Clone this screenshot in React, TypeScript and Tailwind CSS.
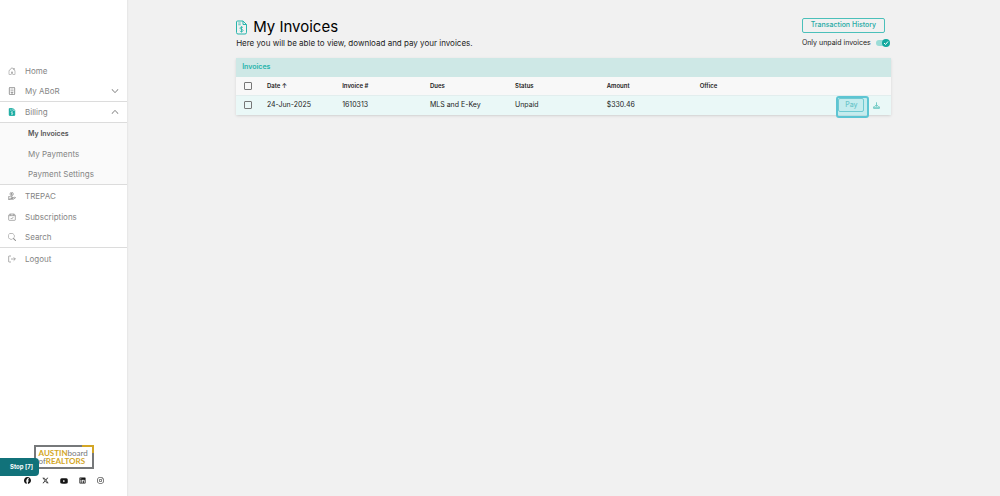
import React from "react";
import { FaFacebook, FaXTwitter, FaYoutube, FaLinkedin, FaInstagram } from "react-icons/fa6";
import { BsHouseDoor, BsSearch, BsChevronDown, BsChevronUp } from "react-icons/bs";

const InvoiceIcon = ({ className, solid = false }: { className: string; solid?: boolean }) => (
  <svg viewBox="0 0 22 28" className={className} fill="none" stroke="currentColor" strokeWidth="2" aria-hidden="true">
    <path d="M3 1h11l7 7v16a3 3 0 0 1-3 3H4a3 3 0 0 1-3-3V3a2 2 0 0 1 2-2Z" fill={solid ? "currentColor" : "none"} />
    <path d="M14 1v7h7" stroke={solid ? "#fff" : "currentColor"} />
    <path d="M4.500 5h5M4.500 8.500h5" stroke={solid ? "#fff" : "currentColor"} strokeWidth="1.500" />
    <path d="M14 14.500c-.7-1-1.700-1.300-3-1.300-1.700 0-3 .8-3 2.200 0 3.200 6.200 1.500 6.200 4.600 0 1.400-1.400 2.200-3.200 2.200-1.500 0-2.700-.5-3.300-1.500M11 11.500v12.500" stroke={solid ? "#fff" : "currentColor"} strokeWidth="1.800" />
  </svg>
);

const BuildingIcon = ({ className }: { className: string }) => (
  <svg viewBox="0 0 24 24" className={className} fill="none" stroke="currentColor" strokeWidth="2.500" aria-hidden="true">
    <rect x="4" y="1" width="16" height="22" rx="2" />
    <path d="M8 6h3M13 6h3M8 11h3M13 11h3M8 16h8M12 16v7" />
  </svg>
);

const HandCoinIcon = ({ className }: { className: string }) => (
  <svg viewBox="0 0 24 24" className={className} fill="none" stroke="currentColor" strokeWidth="2" aria-hidden="true">
    <circle cx="11" cy="6" r="5" />
    <path d="M11 3v6M9 5h3M10 7h3M11 11v4M2 14h5l4 2h4v3H9M15 18l6-3 2 2-7 5H2zM2 13v10" />
  </svg>
);

const BagCheckIcon = ({ className }: { className: string }) => (
  <svg viewBox="0 0 24 24" className={className} fill="none" stroke="currentColor" strokeWidth="2" aria-hidden="true">
    <path d="M5 3h14l3 5v12a2 2 0 0 1-2 2H4a2 2 0 0 1-2-2V8zM2 8h20M8 3v5M16 3v5M8 15l3 3 5-6" />
  </svg>
);

const LogoutIcon = ({ className }: { className: string }) => (
  <svg viewBox="0 0 24 24" className={className} fill="none" stroke="currentColor" strokeWidth="2" aria-hidden="true">
    <path d="M9 3H3a1 1 0 0 0-1 1v16a1 1 0 0 0 1 1h6M9 12h13M17 7l5 5-5 5" />
  </svg>
);

const DownloadIcon = ({ className }: { className: string }) => (
  <svg viewBox="0 0 24 24" className={className} fill="none" stroke="currentColor" strokeWidth="2.500" aria-hidden="true">
    <path d="M12 1v13M7 10l5 5 5-5M5 14l-3 4v4h20v-4l-3-4M2 18h20" />
  </svg>
);

const itemClass = "flex h-[21px] items-center gap-[9px] pr-2 pl-2";
const iconClass = "size-2 shrink-0";

function Sidebar() {
  return (
    <aside className="flex w-[127px] shrink-0 flex-col bg-white pt-15 text-[8px] leading-[12px] text-[#858585] shadow-[1px_0_1px_#e8e8e8]">
      <nav>
        <a href="#home" className={itemClass}><BsHouseDoor className={iconClass} />Home</a>
        <button type="button" className={itemClass + " w-full border-b border-[#dcdcdc]"}>
          <BuildingIcon className={iconClass} /><span className="grow text-left">My ABoR</span><BsChevronDown className="size-2 text-[#444]" />
        </button>
        <button type="button" className={itemClass + " w-full border-b border-[#dcdcdc]"}>
          <InvoiceIcon solid className="size-2 shrink-0 text-[#12a99f]" /><span className="grow text-left">Billing</span><BsChevronUp className="size-2 text-[#444]" />
        </button>
        <div className="border-b border-[#dcdcdc] bg-[#fafafa] pt-px">
          <a href="#invoices" className="flex h-5 items-center pl-7 text-[7px] font-semibold text-[#555]">My Invoices</a>
          <a href="#payments" className="flex h-5 items-center pl-7">My Payments</a>
          <a href="#settings" className="flex h-5 items-center pl-7">Payment Settings</a>
        </div>
        <a href="#trepac" className={itemClass}><HandCoinIcon className={iconClass} />TREPAC</a>
        <a href="#subscriptions" className={itemClass}><BagCheckIcon className={iconClass} />Subscriptions</a>
        <a href="#search" className={itemClass + " border-b border-[#dcdcdc]"}><BsSearch className={iconClass} />Search</a>
        <a href="#logout" className={itemClass}><LogoutIcon className={iconClass} />Logout</a>
      </nav>
      <footer className="relative mt-auto pb-3">
        <div className="relative mx-auto flex h-6 w-15 flex-col justify-center border-2 border-[#76787a] pl-[3px] font-['Lato',sans-serif] text-[8px] leading-[8px] text-[#76787a]">
          <span className="absolute -top-[2px] -right-[2px] h-2 w-3 border-t-2 border-r-2 border-[#d3a625]" />
          <span><b className="text-[#d3a625]">AUSTIN</b>board</span>
          <span>of<b className="text-[#d3a625]">REALTORS</b></span>
        </div>
        <div className="mt-2 flex h-[7px] items-center justify-center gap-[11px] text-[#151515]">
          <a href="#facebook" aria-label="Facebook"><FaFacebook className="size-[7px]" /></a>
          <a href="#x" aria-label="X"><FaXTwitter className="size-[7px]" /></a>
          <a href="#youtube" aria-label="YouTube"><FaYoutube className="size-2" /></a>
          <a href="#linkedin" aria-label="LinkedIn"><FaLinkedin className="size-[7px]" /></a>
          <a href="#instagram" aria-label="Instagram"><FaInstagram className="size-[7px]" /></a>
        </div>
        <button type="button" className="absolute bottom-5 left-0 h-[18px] w-[39px] rounded-r bg-[#11727a] pl-1 text-[6px] font-bold text-white">Stop [7]</button>
      </footer>
    </aside>
  );
}

const checkClass = "ml-2 block size-2 appearance-none rounded-[1px] border border-[#777] checked:bg-[#12a99f]";

export default function App() {
  return (
    <div className="flex min-h-screen bg-[#f1f1f1] font-['Inter',sans-serif] text-[#222]">
      <Sidebar />
      <main className="flex grow justify-center pt-[18px]">
        <div className="w-3/4">
          <header className="flex items-start justify-between">
            <div>
              <div className="flex h-[18px] items-center gap-[6px]">
                <InvoiceIcon className="h-[15px] w-[11px] text-[#27b5ac]" />
                <h1 className="text-[15px] text-black">My Invoices</h1>
              </div>
              <p className="text-[8px] leading-[14px]">Here you will be able to view, download and pay your invoices.</p>
            </div>
            <div className="flex flex-col items-start pr-px">
              <button type="button" className="h-[15px] w-[83px] rounded-[2px] border border-[#4bc0ba] text-[7px] font-medium text-[#25aaa4]">Transaction History</button>
              <label className="mt-1 flex h-[11px] w-[88px] items-center justify-between text-[7px] leading-[11px]">
                Only unpaid invoices
                <span className="relative flex h-2 w-[14px] items-center">
                  <input type="checkbox" defaultChecked className="h-[6px] w-3 appearance-none rounded-full bg-[#9bdcd7]" />
                  <svg viewBox="0 0 16 16" className="pointer-events-none absolute right-0 size-2" aria-hidden="true"><circle cx="8" cy="8" r="8" fill="#12a99f" /><path d="m4 8 3 3 5-6" fill="none" stroke="#fff" strokeWidth="2" /></svg>
                </span>
              </label>
            </div>
          </header>
          <section className="mt-2 bg-[#eaf8f7] shadow-sm">
            <h2 className="h-[19px] bg-[#cee8e6] pl-[6px] text-[7px] leading-[18px] font-semibold text-[#27b5ac]">Invoices</h2>
            <table className="w-full table-fixed text-left">
              <colgroup><col className="w-[4.7%]" /><col className="w-[11.5%]" /><col className="w-[13.4%]" /><col className="w-[13%]" /><col className="w-[14%]" /><col className="w-[14.2%]" /><col className="w-[20.9%]" /><col /></colgroup>
              <thead>
                <tr className="h-[18px] border-b border-[#e2eeee] bg-[#f8f8f8] text-[6px] [&>th]:p-0 [&>th]:font-semibold">
                  <th><input type="checkbox" aria-label="Select all invoices" className={checkClass} /></th>
                  <th>Date ↑</th><th>Invoice #</th><th>Dues</th><th>Status</th><th>Amount</th><th>Office</th><th aria-label="Actions" />
                </tr>
              </thead>
              <tbody>
                <tr className="h-5 text-[7px] [&>td]:p-0">
                  <td><input type="checkbox" aria-label="Select invoice 1610313" className={checkClass} /></td>
                  <td>24-Jun-2025</td><td>1610313</td><td>MLS and E-Key</td><td>Unpaid</td><td>$330.46</td><td />
                  <td>
                    <div className="relative flex items-center gap-[9px] pl-[2px]">
                      <button type="button" className="h-[14px] w-[26px] rounded-[2px] border border-[#3fb5bd] text-[7px] font-medium text-[#2fa9ab]">Pay</button>
                      <span className="pointer-events-none absolute -top-[2px] left-0 h-[22px] w-[33px] rounded-[3px] border-2 border-[#5dc5d3] bg-[#9fe0e6]/50" />
                      <button type="button" aria-label="Download"><DownloadIcon className="size-[7px] text-[#4bbcb5]" /></button>
                    </div>
                  </td>
                </tr>
              </tbody>
            </table>
          </section>
        </div>
      </main>
    </div>
  );
}
